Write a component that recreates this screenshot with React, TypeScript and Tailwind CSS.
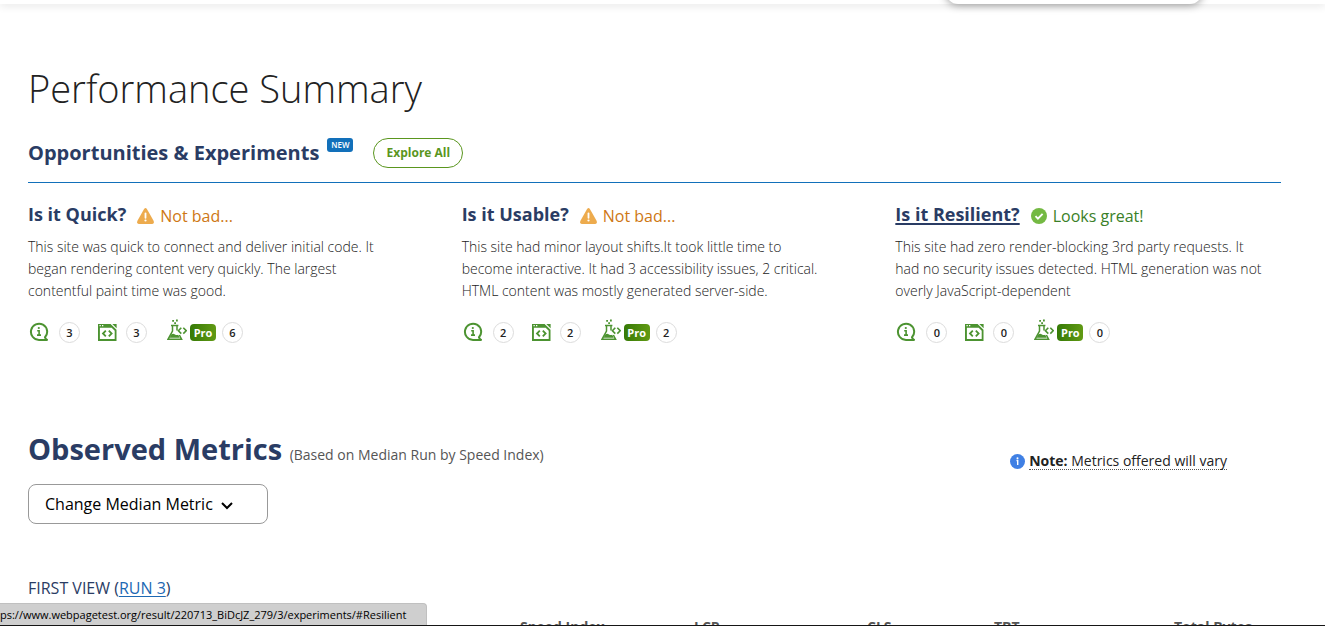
import React from "react";

type Mood = "warn" | "good";

interface Summary {
  title: string;
  hovered?: boolean;
  mood: Mood;
  verdict: string;
  text: string;
  counts: [number, number, number];
}

const summaries: Summary[] = [
  {
    title: "Is it Quick?",
    mood: "warn",
    verdict: "Not bad...",
    text: "This site was quick to connect and deliver initial code. It began rendering content very quickly. The largest contentful paint time was good.",
    counts: [3, 3, 6],
  },
  {
    title: "Is it Usable?",
    mood: "warn",
    verdict: "Not bad...",
    text: "This site had minor layout shifts.It took little time to become interactive. It had 3 accessibility issues, 2 critical. HTML content was mostly generated server-side.",
    counts: [2, 2, 2],
  },
  {
    title: "Is it Resilient?",
    hovered: true,
    mood: "good",
    verdict: "Looks great!",
    text: "This site had zero render-blocking 3rd party requests. It had no security issues detected. HTML generation was not overly JavaScript-dependent",
    counts: [0, 0, 0],
  },
];

function WarnIcon() {
  return (
    <svg className="h-4 w-[17px]" viewBox="0 0 17 16" aria-hidden="true">
      <path d="M7.1 0.9Q8.5-.7 9.9.9L16.7 13Q17.4 15.8 15.2 16H1.8Q-.4 15.8.3 13Z" fill="#edab4d" />
      <path d="M8.5 5.5v4.3" stroke="#fff" strokeWidth="1.8" strokeLinecap="round" />
      <circle cx="8.5" cy="12.5" r="1.1" fill="#fff" />
    </svg>
  );
}

function GoodIcon() {
  return (
    <svg className="h-4 w-4" viewBox="0 0 16 16" aria-hidden="true">
      <circle cx="8" cy="8" r="8" fill="#74b943" />
      <path d="M4.5 8.2l2.4 2.4 4.7-4.8" fill="none" stroke="#fff" strokeWidth="1.9" />
    </svg>
  );
}

function TipIcon() {
  return (
    <svg className="h-5 w-5" viewBox="0 0 20 20" fill="none" stroke="#4c9331" aria-hidden="true">
      <path d="M18 17.9H10A8.1 8.1 0 1 1 16 15.3Q16.6 17 18 17.9Z" strokeWidth="2" strokeLinejoin="round" />
      <path d="M8.2 8.7h1.9v4.4M8 13.1h4" strokeWidth="1.6" />
      <circle cx="9.8" cy="6" r="1.1" fill="#4c9331" stroke="none" />
    </svg>
  );
}

function CodeIcon() {
  return (
    <svg className="h-5 w-5" viewBox="0 0 20 20" aria-hidden="true">
      <path d="M1 2h12.6l5.9 5.8V19H1ZM2.9 5.8v11.3h14.8V8.8l-3-3Z" fill="#4c9331" fillRule="evenodd" />
      <path d="M15.3 2h4.3v4.3Z" fill="#4c9331" />
      <path d="M8.8 8.7L6 11.5l2.8 2.8M11.8 8.7l2.8 2.8-2.8 2.8" fill="none" stroke="#4c9331" strokeWidth="1.8" />
      <path d="M2.5 3.7h1.3M5 3.7h1.3" stroke="#fff" strokeWidth="1.2" />
    </svg>
  );
}

function FlaskIcon() {
  return (
    <svg className="h-[22px] w-5" viewBox="0 0 20 22" fill="none" stroke="#4c9331" aria-hidden="true">
      <path d="M4 6.6h7.4M5.5 7v5L1 20.3h13.6L12.4 16M10 7v4.6" strokeWidth="1.5" />
      <path d="M4.4 15.2q2-.8 3.6.3 1.6.9 3.2.2l1.6 3H2.5Z" fill="#4c9331" stroke="none" />
      <path d="M14.3 8.8l-2.9 2.9 2.9 2.9M16.3 8.8l2.9 2.9-2.9 2.9" strokeWidth="1.6" />
      <path d="M5.2.9h1.8v1.8H5.2ZM9 .6h1.8v1.8H9ZM7.2 3.3H9v1.8H7.2Z" fill="#4c9331" stroke="none" />
    </svg>
  );
}

function Count({ value }: { value: number }) {
  return (
    <span className="flex size-[21px] items-center justify-center rounded-full border border-[#dcdcdc] text-[11px] leading-none font-semibold text-[#222]">
      {value}
    </span>
  );
}

function SummaryCard({ item }: { item: Summary }) {
  return (
    <article>
      <div className="flex items-end">
        <h3 className="pb-0.5 text-lg leading-6 font-bold">
          <a
            href="#experiments"
            className={item.hovered ? "text-[#2a3c64] underline decoration-2 underline-offset-2" : "text-[#2a3c64]"}
          >
            {item.title}
          </a>
        </h3>
        <p
          className={
            item.mood === "warn"
              ? "ml-[11px] flex h-[25px] items-center gap-1.5 text-base text-[#ce7714]"
              : "ml-[11px] flex h-[25px] items-center gap-1.5 text-base text-[#3a7f28]"
          }
        >
          {item.mood === "warn" ? <WarnIcon /> : <GoodIcon />}
          {item.verdict}
        </p>
      </div>
      <p className="mt-2 max-w-[368px] text-sm leading-[22px] font-light text-[#222]">{item.text}</p>
      <ul className="mt-[18px] flex h-6 items-center">
        <li className="flex items-center gap-2.5 pl-px">
          <TipIcon />
          <Count value={item.counts[0]} />
        </li>
        <li className="ml-[17px] flex items-center gap-[9px]">
          <CodeIcon />
          <Count value={item.counts[1]} />
        </li>
        <li className="ml-5 flex items-center">
          <span className="mb-1">
            <FlaskIcon />
          </span>
          <span className="ml-[3px] flex h-[17px] w-[26px] items-center justify-center rounded bg-linear-to-r from-[#357a06] to-[#619a14] text-[11px] leading-none font-bold text-white">
            Pro
          </span>
          <span className="ml-1.5">
            <Count value={item.counts[2]} />
          </span>
        </li>
      </ul>
    </article>
  );
}

const columns = ["Speed Index", "LCP", "CLS", "TBT", "Total Bytes"];

export default function App() {
  return (
    <div className="relative h-screen overflow-hidden bg-white font-['Open_Sans',sans-serif] text-[#222]">
      <header className="relative h-1 bg-white shadow-[0_1px_8px_rgba(0,0,0,0.16)]">
        <div className="absolute right-[123px] bottom-0 h-10 w-[256px] rounded-b-xl bg-white shadow-[0_1px_8px_rgba(0,0,0,0.4)]" />
      </header>
      <main className="pr-11 pl-7">
        <h1 className="pt-14 text-[38px] leading-14 font-light">Performance Summary</h1>
        <section>
          <div className="mt-[22px] flex h-[45px] items-start border-b border-[#1270ba]">
            <h2 className="text-xl leading-[30px] font-bold text-[#2a3c64]">Opportunities &amp; Experiments</h2>
            <span className="ml-2 flex h-3.5 w-[26px] items-center justify-center rounded-[3px] bg-[#1270ba] text-[8px] leading-none font-semibold text-white">
              NEW
            </span>
            <a
              href="#explore"
              className="ml-5 flex h-[30px] w-[90px] items-center justify-center rounded-full border border-[#5a961e] text-xs font-bold text-[#5a961e]"
            >
              Explore All
            </a>
          </div>
          <div className="mt-[19px] grid grid-cols-3 gap-12">
            {summaries.map((item) => (
              <SummaryCard key={item.title} item={item} />
            ))}
          </div>
        </section>
        <section className="mt-[85px]">
          <div className="flex items-end justify-between">
            <h2 className="text-[29px] leading-10 font-bold text-[#2a3c64]">
              Observed Metrics{" "}
              <span className="text-sm font-normal text-[#555]">(Based on Median Run by Speed Index)</span>
            </h2>
            <p className="mr-[54px] flex h-4 items-center gap-1 text-sm">
              <svg className="h-[15px] w-[15px]" viewBox="0 0 15 15" aria-hidden="true">
                <circle cx="7.5" cy="7.5" r="7.5" fill="#4080e4" />
                <path d="M6.5 6.5h1.2v4.4" fill="none" stroke="#fff" strokeWidth="1.4" />
                <circle cx="7.5" cy="4.2" r="1" fill="#fff" />
              </svg>
              <span className="border-b border-dotted border-[#555] leading-4">
                <strong>Note:</strong> Metrics offered will vary
              </span>
            </p>
          </div>
          <button
            type="button"
            className="mt-[15px] flex h-10 w-60 items-center gap-2 rounded-lg border border-[#999] pl-4 text-base text-black"
          >
            Change Median Metric
            <svg className="mt-1 h-2 w-3" viewBox="0 0 12 8" fill="none" stroke="#000" strokeWidth="2" aria-hidden="true">
              <path d="M1 1l5 5 5-5" />
            </svg>
          </button>
          <h3 className="mt-[52px] text-base leading-6 text-[#2a3c64]">
            FIRST VIEW (
            <a href="#run3" className="text-[#1d68b3] underline underline-offset-2">
              RUN 3
            </a>
            )
          </h3>
          <table className="mt-[17px] ml-[492px] text-left text-sm leading-5 text-[#555]">
            <thead>
              <tr>
                {columns.map((label) => (
                  <th
                    key={label}
                    scope="col"
                    className="p-0 font-bold whitespace-nowrap first:w-[174px] nth-2:w-[173px] nth-3:w-[127px] nth-4:w-[180px]"
                  >
                    {label}
                  </th>
                ))}
              </tr>
            </thead>
          </table>
        </section>
      </main>
      <div className="absolute bottom-0 left-0 h-[23px] w-[427px] overflow-hidden rounded-tr border-t border-r border-[#c0c0c0] bg-[#cfcfcf] text-[11px] leading-[22px] whitespace-nowrap text-black">
        ps://www.webpagetest.org/result/220713_BiDcJZ_279/3/experiments/#Resilient
      </div>
      <div className="absolute inset-x-0 bottom-0 h-px bg-[#161616]" />
    </div>
  );
}
